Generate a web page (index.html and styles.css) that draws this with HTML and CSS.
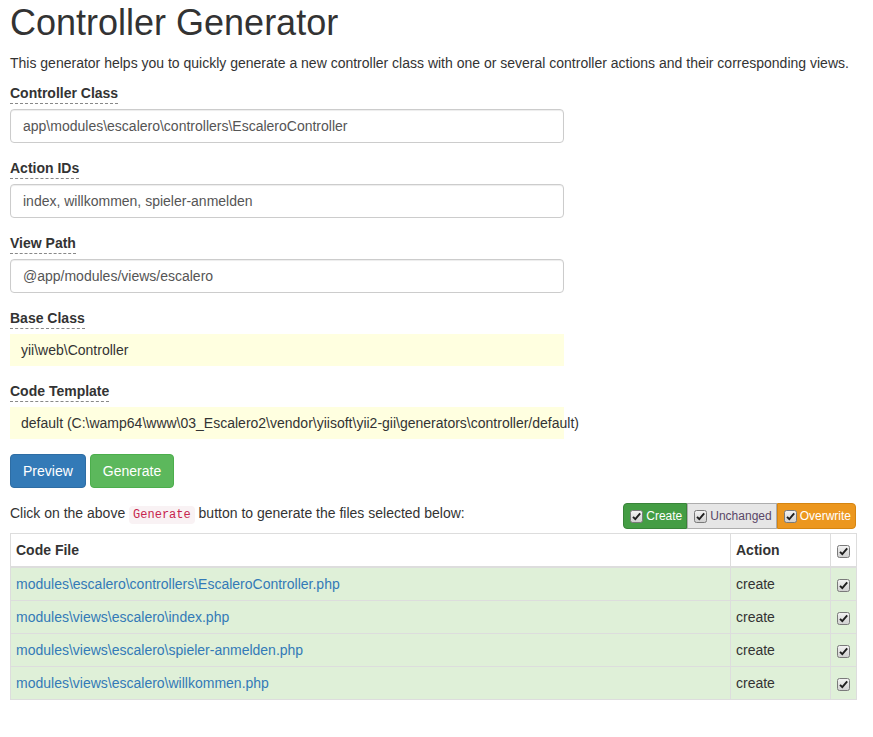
FILE: index.html
```html
<!DOCTYPE html>
<html>
<head>
<meta charset="utf-8">
<link rel="stylesheet" href="styles.css">
</head>
<body>
<div class="page">
  <h1 class="title">Controller Generator</h1>
  <p class="intro">This generator helps you to quickly generate a new controller class with one or several controller actions and their corresponding views.</p>

  <div class="form">
    <div class="group">
      <label class="lbl">Controller Class</label>
      <div class="input">app\modules\escalero\controllers\EscaleroController</div>
    </div>
    <div class="group">
      <label class="lbl">Action IDs</label>
      <div class="input">index, willkommen, spieler-anmelden</div>
    </div>
    <div class="group">
      <label class="lbl">View Path</label>
      <div class="input">@app/modules/views/escalero</div>
    </div>
    <div class="group">
      <label class="lbl">Base Class</label>
      <div class="sticky">yii\web\Controller</div>
    </div>
    <div class="group">
      <label class="lbl">Code Template</label>
      <div class="sticky">default (C:\wamp64\www\03_Escalero2\vendor\yiisoft\yii2-gii\generators\controller/default)</div>
    </div>
    <div class="buttons">
      <button class="btn btn-primary">Preview</button>
      <button class="btn btn-success">Generate</button>
    </div>
  </div>

  <div class="files-head">
    <p class="hint">Click on the above <code>Generate</code> button to generate the files selected below:</p>
    <div class="legend">
      <span class="leg leg-create"><span class="cb"><svg width="13" height="13" viewBox="0 0 13 13"><defs><linearGradient id="g1" x1="0" y1="0" x2="0" y2="1"><stop offset="0" stop-color="#f4f4f4"/><stop offset="1" stop-color="#cfcfcf"/></linearGradient></defs><rect x="0.5" y="0.5" width="12" height="12" rx="2" fill="url(#g1)" stroke="#7a7a7a"/><path d="M3 6.8 L5.3 9.2 L10.2 3.4" fill="none" stroke="#1e1e1e" stroke-width="1.9"/></svg></span>Create</span><span class="leg leg-unchanged"><span class="cb"><svg width="13" height="13" viewBox="0 0 13 13"><rect x="0.5" y="0.5" width="12" height="12" rx="2" fill="url(#g1)" stroke="#7a7a7a"/><path d="M3 6.8 L5.3 9.2 L10.2 3.4" fill="none" stroke="#1e1e1e" stroke-width="1.9"/></svg></span>Unchanged</span><span class="leg leg-overwrite"><span class="cb"><svg width="13" height="13" viewBox="0 0 13 13"><rect x="0.5" y="0.5" width="12" height="12" rx="2" fill="url(#g1)" stroke="#7a7a7a"/><path d="M3 6.8 L5.3 9.2 L10.2 3.4" fill="none" stroke="#1e1e1e" stroke-width="1.9"/></svg></span>Overwrite</span>
    </div>
  </div>

  <table class="files">
    <colgroup><col><col class="c-action"><col class="c-check"></colgroup>
    <thead>
      <tr><th>Code File</th><th>Action</th><th class="chk"><span class="cb"><svg width="13" height="13" viewBox="0 0 13 13"><rect x="0.5" y="0.5" width="12" height="12" rx="2" fill="url(#g1)" stroke="#7a7a7a"/><path d="M3 6.8 L5.3 9.2 L10.2 3.4" fill="none" stroke="#1e1e1e" stroke-width="1.9"/></svg></span></th></tr>
    </thead>
    <tbody>
      <tr class="create"><td><a href="#">modules\escalero\controllers\EscaleroController.php</a></td><td>create</td><td class="chk"><span class="cb"><svg width="13" height="13" viewBox="0 0 13 13"><rect x="0.5" y="0.5" width="12" height="12" rx="2" fill="url(#g1)" stroke="#7a7a7a"/><path d="M3 6.8 L5.3 9.2 L10.2 3.4" fill="none" stroke="#1e1e1e" stroke-width="1.9"/></svg></span></td></tr>
      <tr class="create"><td><a href="#">modules\views\escalero\index.php</a></td><td>create</td><td class="chk"><span class="cb"><svg width="13" height="13" viewBox="0 0 13 13"><rect x="0.5" y="0.5" width="12" height="12" rx="2" fill="url(#g1)" stroke="#7a7a7a"/><path d="M3 6.8 L5.3 9.2 L10.2 3.4" fill="none" stroke="#1e1e1e" stroke-width="1.9"/></svg></span></td></tr>
      <tr class="create"><td><a href="#">modules\views\escalero\spieler-anmelden.php</a></td><td>create</td><td class="chk"><span class="cb"><svg width="13" height="13" viewBox="0 0 13 13"><rect x="0.5" y="0.5" width="12" height="12" rx="2" fill="url(#g1)" stroke="#7a7a7a"/><path d="M3 6.8 L5.3 9.2 L10.2 3.4" fill="none" stroke="#1e1e1e" stroke-width="1.9"/></svg></span></td></tr>
      <tr class="create"><td><a href="#">modules\views\escalero\willkommen.php</a></td><td>create</td><td class="chk"><span class="cb"><svg width="13" height="13" viewBox="0 0 13 13"><rect x="0.5" y="0.5" width="12" height="12" rx="2" fill="url(#g1)" stroke="#7a7a7a"/><path d="M3 6.8 L5.3 9.2 L10.2 3.4" fill="none" stroke="#1e1e1e" stroke-width="1.9"/></svg></span></td></tr>
    </tbody>
  </table>
</div>
</body>
</html>
```

FILE: styles.css
```css
html, body {
  margin: 0;
  padding: 0;
  background: #fff;
}
body {
  font-family: "Liberation Sans", Arial, sans-serif;
  font-size: 14px;
  line-height: 20px;
  color: #333;
}
.page {
  padding: 0 16px 0 10px;
}
.title {
  font-size: 36px;
  font-weight: normal;
  line-height: 40px;
  margin: 3px 0 10px;
  color: #333;
}
.intro {
  margin: 0 0 10px;
}
.form {
  width: 554px;
}
.group {
  margin-bottom: 15px;
}
.lbl {
  display: inline-block;
  font-weight: bold;
  border-bottom: 1px dashed #888;
  margin-bottom: 5px;
}
.input {
  height: 34px;
  box-sizing: border-box;
  padding: 6px 12px;
  border: 1px solid #ccc;
  border-radius: 4px;
  box-shadow: inset 0 1px 1px rgba(0,0,0,.075);
  color: #555;
  background: #fff;
}
.sticky {
  padding: 6px 11px;
  background: #ffffe0;
  white-space: nowrap;
  color: #333;
}
.buttons {
  display: flex;
  gap: 4px;
  margin-bottom: 15px;
}
.btn {
  font-family: inherit;
  font-size: 14px;
  line-height: 20px;
  height: 34px;
  padding: 6px 12px;
  border: 1px solid transparent;
  border-radius: 4px;
  color: #fff;
}
.btn-primary {
  background: #337ab7;
  border-color: #2e6da4;
}
.btn-success {
  background: #5cb85c;
  border-color: #4cae4c;
}
.files-head {
  display: flex;
  justify-content: space-between;
  align-items: flex-start;
}
.hint {
  margin: 0;
}
code {
  font-family: "Liberation Mono", "DejaVu Sans Mono", monospace;
  font-size: 12px;
  color: #c7254e;
  background: #f9f2f4;
  padding: 2px 4px;
  border-radius: 4px;
}
.legend {
  display: flex;
  height: 26px;
  margin-right: 1px;
}
.leg {
  display: flex;
  align-items: center;
  padding: 0 4px 0 6px;
  font-size: 12px;
  border: 1px solid transparent;
}
.leg .cb {
  margin-right: 3px;
}
.leg-create {
  background: #449d44;
  border-color: #398439;
  color: #fff;
  border-radius: 4px 0 0 4px;
}
.leg-unchanged {
  background: #e6e6e6;
  border-color: #adadad;
  color: #5a4666;
}
.leg-overwrite {
  background: #ec971f;
  border-color: #d58512;
  color: #fff;
  border-radius: 0 4px 4px 0;
}
.cb {
  display: inline-flex;
  width: 13px;
  height: 13px;
}
.cb svg {
  display: block;
}
.files {
  width: 847px;
  margin-top: 4px;
  border-collapse: collapse;
  border: 1px solid #ddd;
  table-layout: fixed;
}
.c-action {
  width: 100px;
}
.c-check {
  width: 26px;
}
.files th, .files td {
  border: 1px solid #ddd;
  padding: 6px 5px;
  text-align: left;
  line-height: 20px;
  vertical-align: middle;
}
.files th {
  font-weight: bold;
  border-bottom-width: 2px;
}
.files td.chk, .files th.chk {
  text-align: center;
  padding: 0;
}
.files .chk .cb {
  vertical-align: middle;
}
.files tr.create td {
  background: #dff0d8;
}
.files a {
  color: #337ab7;
  text-decoration: none;
}
```
